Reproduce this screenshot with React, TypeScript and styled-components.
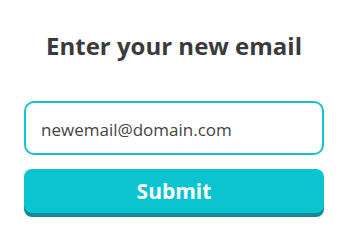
import React from "react";
import styled, { createGlobalStyle } from "styled-components";

const Global = createGlobalStyle`
  html, body { margin: 0; padding: 0; background: #ffffff; }
  body { font-family: "Open Sans", "Noto Sans", sans-serif; }
  * { box-sizing: border-box; }
`;

const Page = styled.div`
  width: 351px;
  height: 248px;
  display: flex;
  flex-direction: column;
  padding: 30px 0 0 24px;
`;

const Title = styled.h1`
  margin: 0;
  width: 300px;
  text-align: center;
  font-size: 24px;
  line-height: 32px;
  font-weight: 700;
  color: #3b3b3b;
  white-space: nowrap;
`;

const Form = styled.form`
  display: flex;
  flex-direction: column;
  gap: 14px;
  width: 300px;
  margin-top: 39px;
`;

const EmailInput = styled.input`
  height: 54px;
  border: 2px solid #14c3d0;
  border-radius: 10px;
  padding: 2px 15px 0;
  font-family: "Open Sans", sans-serif;
  font-size: 17px;
  color: #444444;
  outline: none;
  background: #fff;
`;

const SubmitButton = styled.button`
  height: 44px;
  border: none;
  border-radius: 8px;
  background: #0bc4cf;
  box-shadow: 0 4px 0 #0f8d93;
  color: #ffffff;
  font-family: "Open Sans", sans-serif;
  font-size: 21px;
  font-weight: 700;
  cursor: pointer;
  padding: 0;
`;

export default function App() {
  return (
    <>
      <Global />
      <Page>
        <Title>Enter your new email</Title>
        <Form onSubmit={(e) => e.preventDefault()}>
          <EmailInput type="email" defaultValue="newemail@domain.com" />
          <SubmitButton type="submit">Submit</SubmitButton>
        </Form>
      </Page>
    </>
  );
}
